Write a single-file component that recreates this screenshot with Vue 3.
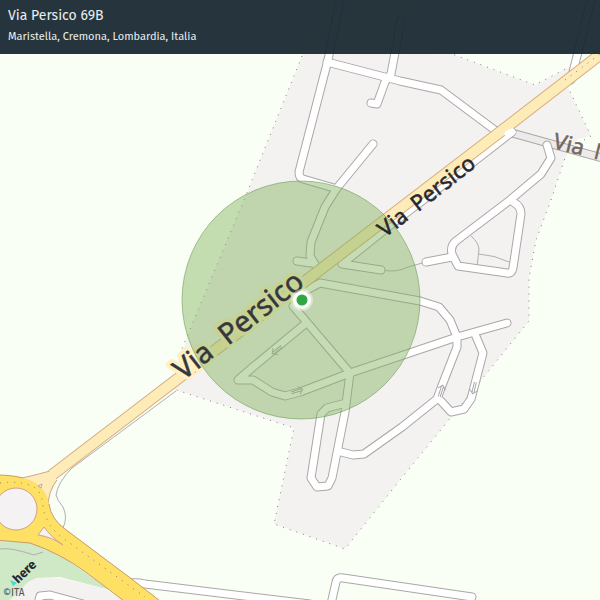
<script setup>
const place = {
  street: 'Via Persico 69B',
  area: 'Maristella, Cremona, Lombardia, Italia',
}

const residential =
  '326,-2 302,56 244,200 191,327 184,347 170,388 294,428 274,524 345,549 400,480 452,416 529,321 529,278 536,240 551,200 565,158 578,139 591,136 567,85 600,57 571,66 535,85 455,55 402,36 410,-2'

const roads = [
  'M341,-4 L328,60 L299,172 Q299,178 303,179 L334,188',
  'M327,62 L400,81 L441,90 L500,134',
  'M401,20 L391,74 L385,82 L377,104 L371,103',
  'M373,144 L337,188 L325,207 L311,242 L310,256 L319,271',
  'M297,261 L311,263',
  'M512,132 L467,167 L397,220 L342,264 L381,270',
  'M547,145 L551,158 L541,174 L510,200 L456,241 Q450,246 452,254 L458,266 L507,273 Q512,274 513,268 L521,214 Q521,206 513,202',
  'M426,262 L452,257',
  'M303,292 L320,283 L420,301 L439,307 L450,320 L457,337 L457,347 L441,388 L437,399 L402,427 L364,454 L353,455 L341,452',
  'M507,323 L457,337 L350,373 L300,392 L285,396 L272,392 L253,380 L238,380 L253,367 L305,324',
  'M293,306 L350,373 L345,412 L332,478 L328,486 L317,487 L311,478 L321,414 L327,408 L346,403',
  'M475,334 L483,353 L471,399 L464,409 L451,412 L441,401',
  'M130,583 Q137,582 145,584 L310,604',
  'M331,604 L336,582 Q337,577 343,578 L472,597',
  'M38,604 L40,596 L50,595 L90,606',
  'M571,80 L592,-4',
]

const footpaths = [
  'M382,270 Q396,273 408,267 L426,262',
  'M471,236 Q479,243 479,250 L477,266',
  'M479,254 Q494,255 509,262',
  'M176,391 L72,468 Q58,482 56,495 Q57,500 63,507 Q68,517 63,528',
  'M0,549 Q10,547 34,555 L43,552',
]

const boundaries = [
  'M302,56 L244,200 L191,327 L178,358',
  'M170,388 L294,428 L274,524 L345,549 L400,480 L452,416 L529,321 L529,278 L536,240 L551,200 L565,158',
  'M584,140 L591,136 L567,85',
  'M571,66 L535,85 L455,55 L402,36',
]

const arrows = [
  { x: 277, y: 350, turn: 142 },
  { x: 297, y: 391, turn: -18 },
  { x: 441, y: 391, turn: -72 },
  { x: 474, y: 388, turn: 103 },
]
</script>

<template>
  <main class="card">
    <svg class="map" viewBox="0 0 600 600" role="img" :aria-label="`Map of ${place.street}`">
      <rect class="field" width="600" height="600" />
      <polygon class="town" :points="residential" />
      <path class="park" d="M0,538 L30,542 L60,555 L110,590 L60,577 L36,578 L10,600 L0,600 Z" />
      <path class="town" d="M10,600 L27,583 Q33,578 42,578 L60,578 L105,589 L130,604 Z" />

      <path class="boundary" v-for="d in boundaries" :key="d" :d="d" />
      <path class="footpath" v-for="d in footpaths" :key="d" :d="d" />
      <path class="road-edge" d="M512,133 L548,143 L606,159" />
      <path class="side-road" d="M512,133 L548,143 L606,159" />
      <path class="road-edge" v-for="d in roads" :key="'e' + d" :d="d" />
      <path class="road" v-for="d in roads" :key="'r' + d" :d="d" />
      <g class="arrow" v-for="a in arrows" :key="a.x" :transform="`translate(${a.x} ${a.y}) rotate(${a.turn})`">
        <path d="M-6,-1 L5,-1 M-6,1 L5,1 M2,-4 L6,0 L2,4" />
      </g>

      <path class="main-edge" d="M52,475 L150,400 L500,132 L610,47" />
      <path class="main-flare" d="M50,471 Q36,475 22,478 L48,508 Q48,491 57,480" />
      <path class="main-road" d="M52,475 L150,400 L500,132 L610,47" />
      <path class="road" d="M508,134 L512,132" />
      <path class="boundary" d="M565,80 L600,54" />

      <path
        class="ring"
        d="M-4,475 Q20,475 34,482 Q48,491 49,506 Q51,519 65,529 L133,580 L164,604 L128,604 L87,573 Q60,553 30,543 L-4,540 Z"
      />
      <path
        class="ring-edge"
        d="M-4,475 Q12,475 23,478 M49,504 Q51,519 65,529 L133,580 L164,604 M128,604 L87,573 Q60,553 30,543 L-4,540"
      />
      <path class="island" d="M44,527 L38,535 Q52,537 63,545 Q50,536 44,527 Z" />
      <circle class="island" cx="16" cy="509" r="21" />
      <path class="boundary" d="M0,483 Q24,480 37,489 Q43,496 43,509 Q49,530 67,541 L145,597" />
      <path class="island" d="M38,486 L42,484 L41,488 Z" />

      <g class="street-label large halo" transform="translate(183 381) rotate(-38)">
        <text>Via</text><text x="57">Persico</text>
      </g>
      <circle class="radius" cx="301" cy="300" r="119" />
      <g class="street-label large" transform="translate(183 381) rotate(-38)">
        <text>Via</text><text x="57">Persico</text>
      </g>
      <g class="street-label medium" transform="translate(385 238) rotate(-38)">
        <text>Via</text><text x="42">Persico</text>
      </g>
      <g class="street-label side" transform="translate(552 148) rotate(14)">
        <text>Via</text><text x="42">N</text>
      </g>

      <circle class="pin-glow" cx="302" cy="300" r="11" />
      <circle class="pin-rim" cx="302" cy="300" r="9" />
      <circle class="pin" cx="302" cy="300" r="5.5" />

      <path class="logo-mark" d="M10,580 L17,583 L13,586 Z" />
      <text class="logo" transform="translate(18 584) rotate(-44)">here</text>
      <text class="credit" x="3" y="596">©ITA</text>
    </svg>

    <header class="caption">
      <h1>{{ place.street }}</h1>
      <p>{{ place.area }}</p>
    </header>
  </main>
</template>

<style>
body {
  margin: 0;
}
</style>

<style scoped>
.card {
  position: relative;
  overflow: hidden;
  font-family: "Fira Sans", "Noto Sans", sans-serif;
}
.map {
  display: block;
  width: 100%;
  height: auto;
}
.caption {
  position: absolute;
  top: 0;
  left: 0;
  right: 0;
  padding: 6px 8px 8px;
  background: rgba(22, 38, 46, 0.93);
  color: #e9eef0;
}
.caption h1 {
  margin: 0 0 2px;
  font-size: 14px;
  line-height: 20px;
  font-weight: 400;
}
.caption p {
  margin: 0;
  font-size: 11px;
  line-height: 18px;
}
.field { fill: #f9fff5; }
.town { fill: #f4f2f1; }
.park { fill: #cfe8c6; }
.boundary {
  fill: none;
  stroke: #857b80;
  stroke-width: 1;
  stroke-dasharray: 1 6;
}
.footpath {
  fill: none;
  stroke: #b0aeae;
  stroke-width: 1;
}
.road-edge,
.road,
.side-road {
  fill: none;
  stroke-linecap: round;
  stroke-linejoin: round;
}
.road-edge { stroke: #aaa7a7; stroke-width: 9; }
.road { stroke: #fff; stroke-width: 7; }
.side-road { stroke: #eceaea; stroke-width: 7; }
.arrow path {
  fill: none;
  stroke: #a9a9a9;
  stroke-width: 1;
}
.main-edge {
  fill: none;
  stroke: #d8ac80;
  stroke-width: 12;
}
.main-road {
  fill: none;
  stroke: #fdecb8;
  stroke-width: 10;
}
.main-flare {
  fill: #fdecb8;
  stroke: #d0a480;
}
.ring { fill: #fde064; }
.ring-edge {
  fill: none;
  stroke: #cb9a68;
}
.island {
  fill: #f4f2f2;
  stroke: #cfa287;
}
.radius {
  fill: rgba(128, 178, 94, 0.45);
  stroke: rgba(90, 145, 65, 0.5);
}
.street-label {
  fill: #38363d;
  stroke: #38363d;
  stroke-width: 0.5;
  font-family: "Noto Sans", sans-serif;
}
.large { font-size: 29px; }
.medium { font-size: 22px; fill: #26262e; stroke: #26262e; }
.side { font-size: 22px; fill: #73675f; stroke: #73675f; }
.halo {
  stroke: #fdf0c2;
  stroke-width: 8;
  stroke-linejoin: round;
}
.pin-glow { fill: rgba(255, 255, 255, 0.4); }
.pin-rim { fill: rgba(255, 255, 255, 0.92); }
.pin { fill: #2fa744; }
.logo-mark { fill: #48dad0; }
.logo {
  font-size: 13px;
  font-weight: 700;
  fill: #222b33;
}
.credit {
  font-size: 10px;
  fill: #4f5154;
}
</style>
